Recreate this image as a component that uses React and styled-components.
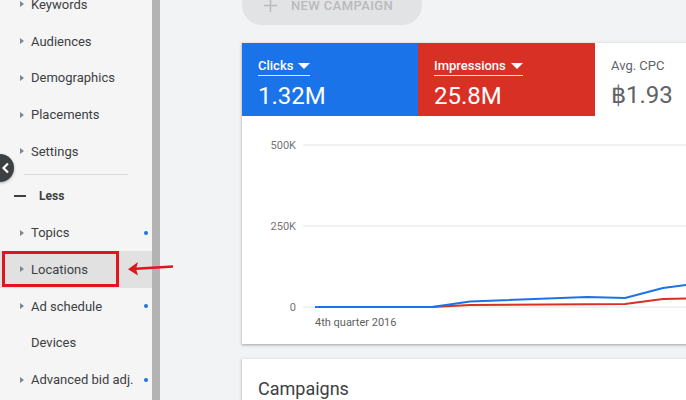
import React from 'react';
import styled, { createGlobalStyle } from 'styled-components';

const GlobalStyle = createGlobalStyle`
  html, body {
    margin: 0;
    padding: 0;
    width: 686px;
    height: 400px;
    overflow: hidden;
    background: #f1f3f4;
    font-family: Roboto, "Liberation Sans", Arial, sans-serif;
  }
`;

const Layout = styled.div`
  position: relative;
  display: flex;
  height: 430px;
  margin-top: -15px;
`;

const Sidebar = styled.nav`
  width: 152px;
  flex-shrink: 0;
  padding-top: 1px;
  background: #f5f5f5;
`;

const ScrollBar = styled.div`
  width: 8px;
  flex-shrink: 0;
  background: #b3b3b3;
`;

const NavItem = styled.div`
  position: relative;
  display: flex;
  align-items: center;
  height: 36.75px;
  padding-left: 20px;
  font-size: 13px;
  color: #3c4043;
  background: ${p => (p.$active ? '#e1e1e1' : 'transparent')};
`;

const Caret = styled.span`
  width: 0;
  height: 0;
  margin-right: 7px;
  border-top: 3px solid transparent;
  border-bottom: 3px solid transparent;
  border-left: 4px solid ${p => (p.$hidden ? 'transparent' : '#80868b')};
`;

const Dot = styled.span`
  position: absolute;
  right: 4px;
  top: 50%;
  width: 4px;
  height: 4px;
  margin-top: -2px;
  border-radius: 50%;
  background: #1a73e8;
`;

const Divider = styled.div`
  height: 1px;
  margin: 4px 24px 3.5px 24px;
  background: #dadce0;
`;

const LessRow = styled.div`
  display: flex;
  align-items: center;
  height: 36px;
  padding-left: 14px;
  font-size: 12px;
  font-weight: 700;
  color: #3c4043;
`;

const Dash = styled.span`
  width: 12px;
  height: 2px;
  margin-right: 13px;
  background: #3c4043;
`;

const Highlight = styled.div`
  position: absolute;
  left: 2px;
  top: 0;
  width: 117px;
  height: 36px;
  box-sizing: border-box;
  border: 3px solid #e3141b;
`;

const CollapseButton = styled.div`
  position: absolute;
  left: -14px;
  top: 169px;
  width: 28px;
  height: 28px;
  border-radius: 50%;
  background: #3c4043;
  box-shadow: 0 1px 3px rgba(0, 0, 0, 0.3);
  display: flex;
  align-items: center;
  justify-content: flex-end;
  padding-right: 4px;
  box-sizing: border-box;
`;

const ArrowOverlay = styled.svg`
  position: absolute;
  left: 126px;
  top: 273px;
`;

const Main = styled.main`
  flex: 1;
  padding-left: 82px;
  display: flex;
  flex-direction: column;
  min-width: 0;

  & > * {
    flex-shrink: 0;
  }
`;

const NewCampaign = styled.button`
  display: flex;
  align-items: center;
  gap: 13px;
  width: 180px;
  height: 40px;
  padding: 0 0 0 21px;
  border: none;
  border-radius: 20px;
  background: #e2e3e4;
  color: #b9babb;
  font-family: inherit;
  font-size: 13px;
  font-weight: 500;
  letter-spacing: 0.4px;
  text-transform: uppercase;
`;

const Card = styled.section`
  width: 600px;
  margin-top: ${p => p.$gap}px;
  background: #fff;
  box-shadow: 0 1px 2px rgba(60, 64, 67, 0.3), 0 1px 3px 1px rgba(60, 64, 67, 0.12);
`;

const Tabs = styled.div`
  display: flex;
  height: 73px;
`;

const Tab = styled.div`
  width: ${p => p.$width}px;
  padding: 12px 16px 0;
  box-sizing: border-box;
  background: ${p => p.$bg};
  color: ${p => p.$fg};
`;

const TabLabel = styled.div`
  display: inline-flex;
  align-items: center;
  gap: 5px;
  padding-bottom: 2px;
  font-size: 13px;
  font-weight: ${p => (p.$plain ? 400 : 500)};
  border-bottom: ${p => (p.$plain ? 'none' : '1px solid rgba(255,255,255,0.85)')};
`;

const Triangle = styled.span`
  width: 0;
  height: 0;
  border-left: 6px solid transparent;
  border-right: 6px solid transparent;
  border-top: 6px solid currentColor;
`;

const TabValue = styled.div`
  margin-top: 6px;
  font-size: 24px;
  line-height: 28px;
`;

const ChartWrap = styled.div`
  height: 228px;
`;

const CardTitle = styled.h2`
  margin: 0;
  padding: 19px 16px;
  font-size: 18px;
  font-weight: 400;
  color: #3c4043;
`;

const topItems = ['Keywords', 'Audiences', 'Demographics', 'Placements', 'Settings'];
const lessItems = [
  { label: 'Topics', dot: true },
  { label: 'Locations', active: true },
  { label: 'Ad schedule', dot: true },
  { label: 'Devices', noCaret: true },
  { label: 'Advanced bid adj.', dot: true },
];

const blue = [[73, 191], [190, 191], [228, 185.5], [345, 181], [383, 182], [421, 172], [444, 169], [520, 164], [600, 160]];
const red = [[73, 191], [190, 191], [228, 189], [383, 188], [421, 183], [444, 182.5], [520, 182], [600, 181]];
const toPts = arr => arr.map(p => p.join(',')).join(' ');

function Chart() {
  const grid = [
    { y: 29, label: '500K' },
    { y: 110, label: '250K' },
    { y: 191, label: '0' },
  ];
  return (
    <svg width="600" height="228">
      {grid.map(g => (
        <g key={g.label}>
          <line x1="61" x2="600" y1={g.y} y2={g.y} stroke="#e3e3e3" strokeWidth="1" />
          <text x="54" y={g.y + 4} textAnchor="end" fontSize="11" fill="#757575" fontFamily="Roboto, sans-serif">
            {g.label}
          </text>
        </g>
      ))}
      <text x="73" y="210" fontSize="11" fill="#616161" fontFamily="Roboto, sans-serif">4th quarter 2016</text>
      <polyline points={toPts(red)} fill="none" stroke="#d93025" strokeWidth="2" strokeLinejoin="round" />
      <polyline points={toPts(blue)} fill="none" stroke="#1a73e8" strokeWidth="2" strokeLinejoin="round" />
    </svg>
  );
}

export default function App() {
  return (
    <>
      <GlobalStyle />
      <Layout>
        <Sidebar>
          {topItems.map(label => (
            <NavItem key={label}>
              <Caret />
              {label}
            </NavItem>
          ))}
          <Divider />
          <LessRow>
            <Dash />
            Less
          </LessRow>
          {lessItems.map(item => (
            <NavItem key={item.label} $active={item.active}>
              <Caret $hidden={item.noCaret} />
              {item.label}
              {item.dot && <Dot />}
              {item.active && <Highlight />}
            </NavItem>
          ))}
        </Sidebar>
        <ScrollBar />
        <Main>
          <NewCampaign>
            <svg width="15" height="15" viewBox="0 0 15 15">
              <path d="M7.5 1v13M1 7.5h13" stroke="#b9babb" strokeWidth="1.5" />
            </svg>
            New campaign
          </NewCampaign>
          <Card $gap={18}>
            <Tabs>
              <Tab $width={176} $bg="#1a73e8" $fg="#fff">
                <TabLabel>Clicks <Triangle /></TabLabel>
                <TabValue>1.32M</TabValue>
              </Tab>
              <Tab $width={177} $bg="#d93025" $fg="#fff">
                <TabLabel>Impressions <Triangle /></TabLabel>
                <TabValue>25.8M</TabValue>
              </Tab>
              <Tab $width={247} $bg="#fff" $fg="#5f6368">
                <TabLabel $plain>Avg. CPC</TabLabel>
                <TabValue>฿1.93</TabValue>
              </Tab>
            </Tabs>
            <ChartWrap>
              <Chart />
            </ChartWrap>
          </Card>
          <Card $gap={15}>
            <CardTitle>Campaigns</CardTitle>
          </Card>
        </Main>
        <CollapseButton>
          <svg width="9" height="12" viewBox="0 0 9 12">
            <path d="M7 1.5L2.5 6L7 10.5" fill="none" stroke="#fff" strokeWidth="2.2" />
          </svg>
        </CollapseButton>
        <ArrowOverlay width="50" height="20" viewBox="0 0 50 20">
          <path d="M47 8.5L6 11" stroke="#e3141b" strokeWidth="2.5" fill="none" />
          <path d="M2 11.3L12 4L10 11L12 17.5Z" fill="#e3141b" />
        </ArrowOverlay>
      </Layout>
    </>
  );
}
